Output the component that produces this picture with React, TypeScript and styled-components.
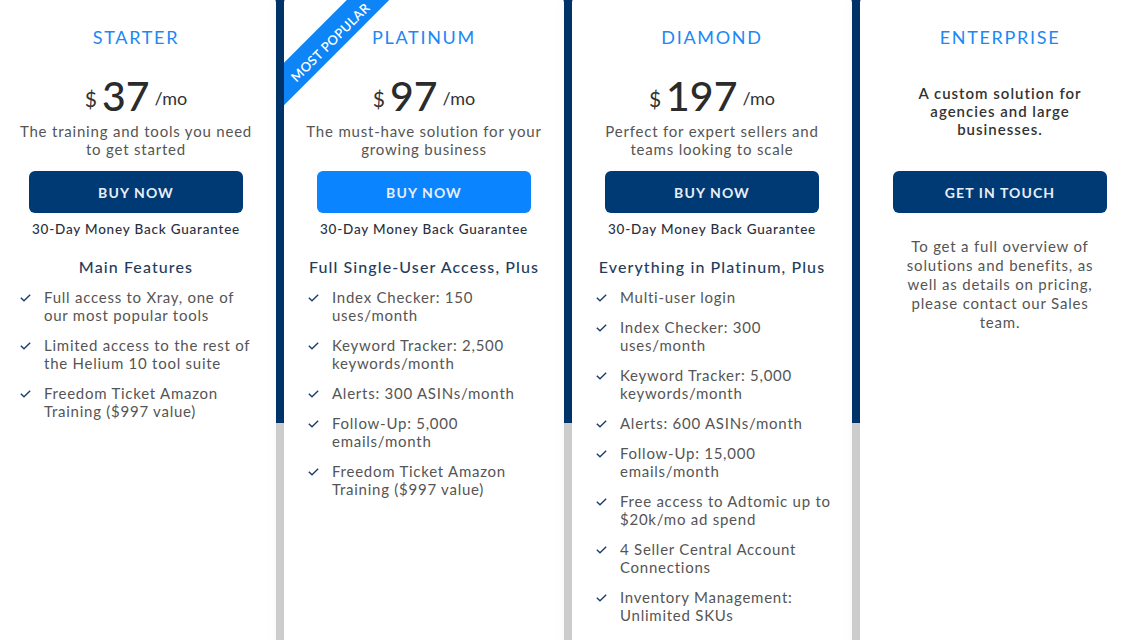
import React from "react";
import styled, { createGlobalStyle } from "styled-components";

const Global = createGlobalStyle`
  html, body { margin: 0; padding: 0; }
  body {
    overflow: hidden;
    font-family: Lato, "Open Sans", sans-serif;
    background: linear-gradient(to bottom, #01376f 0, #01376f 423px, #dadada 423px, #dadada 100%);
    min-height: 640px;
  }
`;

const Row = styled.div`
  display: flex;
  gap: 8px;
  width: 1144px;
  margin-left: -4px;
  margin-top: -5px;
`;

const Card = styled.div`
  position: relative;
  width: 280px;
  flex: 0 0 280px;
  height: 680px;
  background: #fff;
  border-radius: 8px;
  box-shadow: 0 0 20px rgba(0, 0, 0, 0.09);
  overflow: hidden;
  display: flex;
  flex-direction: column;
  align-items: center;
  padding-top: 30px;
  box-sizing: border-box;
`;

const Ribbon = styled.div`
  position: absolute;
  left: -41px;
  top: 30px;
  width: 170px;
  height: 30px;
  padding-top: 5px;
  box-sizing: border-box;
  background: #0d85f7;
  color: #fff;
  transform: rotate(-45deg);
  display: flex;
  align-items: center;
  justify-content: center;
  font-size: 13px;
  font-weight: 600;
  letter-spacing: 0.4px;
  text-transform: uppercase;
`;

const Title = styled.h2`
  margin: 0;
  font-size: 18px;
  line-height: 24px;
  font-weight: 400;
  letter-spacing: 1.7px;
  color: #1b88f3;
`;

const Price = styled.div`
  display: flex;
  align-items: center;
  gap: 5px;
  margin-top: 23px;
  height: 48px;
  color: #333;
`;

const Currency = styled.span`
  font-size: 21px;
  line-height: 1;
  color: #333;
  margin-top: 4px;
`;

const Amount = styled.span`
  font-size: 41px;
  line-height: 48px;
  font-weight: 500;
  color: #2b2b2b;
`;

const Period = styled.span`
  font-size: 18px;
  line-height: 1;
  color: #333;
  margin-top: 4px;
`;

const Desc = styled.p<{ $bold?: boolean; $width?: number; $top?: number; $lh?: number }>`
  margin: ${(p) => p.$top ?? 2}px 0 0;
  max-width: ${(p) => p.$width ?? 250}px;
  text-align: center;
  font-size: 15px;
  line-height: ${(p) => p.$lh ?? 18}px;
  letter-spacing: ${(p) => (p.$bold ? 1 : 0.8)}px;
  color: ${(p) => (p.$bold ? "#333" : "#555")};
  font-weight: ${(p) => (p.$bold ? 600 : 400)};
`;

const Button = styled.button<{ $bright?: boolean; $top?: number }>`
  margin-top: ${(p) => p.$top ?? 13}px;
  width: 214px;
  height: 42px;
  border: 0;
  border-radius: 6px;
  background: ${(p) => (p.$bright ? "#0a84ff" : "#003a75")};
  color: #e9eef5;
  font-family: inherit;
  font-size: 14px;
  font-weight: 700;
  letter-spacing: 1.1px;
  text-transform: uppercase;
  cursor: pointer;
`;

const Guarantee = styled.div`
  margin-top: 8px;
  font-size: 13.5px;
  line-height: 16px;
  letter-spacing: 0.8px;
  color: #2a2f3d;
  font-weight: 500;
`;

const FeatureHead = styled.h3`
  margin: 21px 0 0;
  font-size: 16px;
  line-height: 18px;
  font-weight: 500;
  letter-spacing: 1.1px;
  color: #253c5c;
`;

const List = styled.ul`
  list-style: none;
  margin: 12px 0 0;
  padding: 0 20px 0 24px;
  align-self: stretch;
  display: flex;
  flex-direction: column;
  gap: 12px;
`;

const Item = styled.li`
  display: flex;
  gap: 12px;
  font-size: 15px;
  line-height: 18px;
  letter-spacing: 0.75px;
  color: #555;
`;

const CheckWrap = styled.span`
  flex: 0 0 12px;
  display: flex;
  align-items: flex-start;
  padding-top: 6px;
`;

const Check = () => (
  <CheckWrap>
    <svg width="11" height="8" viewBox="0 0 11 8">
      <polyline points="0.8,3.8 4,6.8 10.2,0.8" fill="none" stroke="#1e3d6b" strokeWidth="1.4" />
    </svg>
  </CheckWrap>
);

type Plan = {
  name: string;
  price: string;
  desc: string;
  bright?: boolean;
  ribbon?: boolean;
  heading: string;
  features: string[];
};

const plans: Plan[] = [
  {
    name: "Starter",
    price: "37",
    desc: "The training and tools you need to get started",
    heading: "Main Features",
    features: [
      "Full access to Xray, one of our most popular tools",
      "Limited access to the rest of the Helium 10 tool suite",
      "Freedom Ticket Amazon Training ($997 value)",
    ],
  },
  {
    name: "Platinum",
    price: "97",
    desc: "The must-have solution for your growing business",
    bright: true,
    ribbon: true,
    heading: "Full Single-User Access, Plus",
    features: [
      "Index Checker: 150 uses/month",
      "Keyword Tracker: 2,500 keywords/month",
      "Alerts: 300 ASINs/month",
      "Follow-Up: 5,000 emails/month",
      "Freedom Ticket Amazon Training ($997 value)",
    ],
  },
  {
    name: "Diamond",
    price: "197",
    desc: "Perfect for expert sellers and teams looking to scale",
    heading: "Everything in Platinum, Plus",
    features: [
      "Multi-user login",
      "Index Checker: 300 uses/month",
      "Keyword Tracker: 5,000 keywords/month",
      "Alerts: 600 ASINs/month",
      "Follow-Up: 15,000 emails/month",
      "Free access to Adtomic up to $20k/mo ad spend",
      "4 Seller Central Account Connections",
      "Inventory Management: Unlimited SKUs",
    ],
  },
];

const PlanCard = ({ plan }: { plan: Plan }) => (
  <Card>
    {plan.ribbon && <Ribbon>Most Popular</Ribbon>}
    <Title>{plan.name.toUpperCase()}</Title>
    <Price>
      <Currency>$</Currency>
      <Amount>{plan.price}</Amount>
      <Period>/mo</Period>
    </Price>
    <Desc>{plan.desc}</Desc>
    <Button $bright={plan.bright}>Buy Now</Button>
    <Guarantee>30-Day Money Back Guarantee</Guarantee>
    <FeatureHead>{plan.heading}</FeatureHead>
    <List>
      {plan.features.map((f) => (
        <Item key={f}>
          <Check />
          <span>{f}</span>
        </Item>
      ))}
    </List>
  </Card>
);

export default function App() {
  return (
    <>
      <Global />
      <Row>
        {plans.map((p) => (
          <PlanCard key={p.name} plan={p} />
        ))}
        <Card>
          <Title>ENTERPRISE</Title>
          <Desc $bold $width={190} $top={35}>
            A custom solution for agencies and large businesses.
          </Desc>
          <Button $top={33}>Get in Touch</Button>
          <Desc $width={205} $top={24} $lh={19}>
            To get a full overview of solutions and benefits, as well as details on pricing, please contact our Sales team.
          </Desc>
        </Card>
      </Row>
    </>
  );
}
